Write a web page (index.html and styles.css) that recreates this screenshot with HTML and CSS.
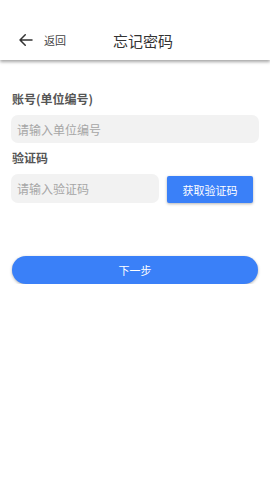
FILE: index.html
```html
<!DOCTYPE html>
<html lang="zh-CN">
<head>
    <meta charset="UTF-8">
    <meta name="viewport" content="width=device-width, initial-scale=1.0">
    <title>忘记密码</title>
    <link rel="stylesheet" href="styles.css">
</head>
<body>
    <div class="header">
        <a href="#" class="back">
            <svg class="arrow" viewBox="0 0 24 24" width="18" height="18">
                <path d="M20 12H4M11 5l-7 7 7 7" fill="none" stroke="#333" stroke-width="2" stroke-linecap="round" stroke-linejoin="round"/>
            </svg>
            <span class="back-text">返回</span>
        </a>
        <h1 class="title">忘记密码</h1>
    </div>

    <div class="form">
        <label class="field-label">账号(单位编号)</label>
        <input class="input" type="text" placeholder="请输入单位编号">

        <label class="field-label">验证码</label>
        <div class="code-row">
            <input class="input code-input" type="text" placeholder="请输入验证码">
            <button class="code-button">获取验证码</button>
        </div>

        <button class="next-button">下一步</button>
    </div>
</body>
</html>
```

FILE: styles.css
```css
* {
    font-family: "Noto Sans CJK SC", "Noto Sans", sans-serif;
    box-sizing: border-box;
}

body {
    margin: 0;
    background-color: #ffffff;
}

.header {
    height: 60px;
    display: flex;
    align-items: center;
    padding-top: 20px;
    background-color: #fff;
    box-shadow: 0 2px 3px rgba(0, 0, 0, 0.35);
}

.back {
    display: flex;
    align-items: center;
    text-decoration: none;
    margin-left: 17px;
}

.arrow {
    display: block;
}

.back-text {
    margin-left: 9px;
    font-size: 11px;
    color: #444;
}

.title {
    margin: 0 0 0 47px;
    font-size: 15px;
    font-weight: normal;
    color: #333;
}

.form {
    display: flex;
    flex-direction: column;
    padding: 31px 11px 0 11px;
}

.field-label {
    font-size: 12px;
    line-height: 16px;
    font-weight: bold;
    color: #555;
    margin-left: 1px;
}

.input {
    height: 28px;
    margin: 8px 0 7px 0;
    border: none;
    outline: none;
    border-radius: 7px;
    background-color: #f2f2f2;
    padding: 0 6px;
    font-size: 12px;
    color: #333;
}

.input::placeholder {
    color: #a6a6a6;
}

.code-row {
    display: flex;
    align-items: center;
    margin-top: 8px;
}

.code-input {
    width: 148px;
    height: 29px;
    margin: 0;
}

.code-button {
    margin-left: 8px;
    width: 86px;
    height: 27px;
    margin-top: 2px;
    border: none;
    border-radius: 2px;
    background-color: #3a80f8;
    color: #fff;
    font-size: 11px;
    box-shadow: 0 1px 3px rgba(0, 0, 0, 0.3);
}

.next-button {
    margin: 53px 1px 0 1px;
    height: 28px;
    border: none;
    border-radius: 14px;
    background-color: #3a80f8;
    color: #fff;
    font-size: 11px;
    box-shadow: 0 1px 3px rgba(0, 0, 0, 0.3);
}
```
